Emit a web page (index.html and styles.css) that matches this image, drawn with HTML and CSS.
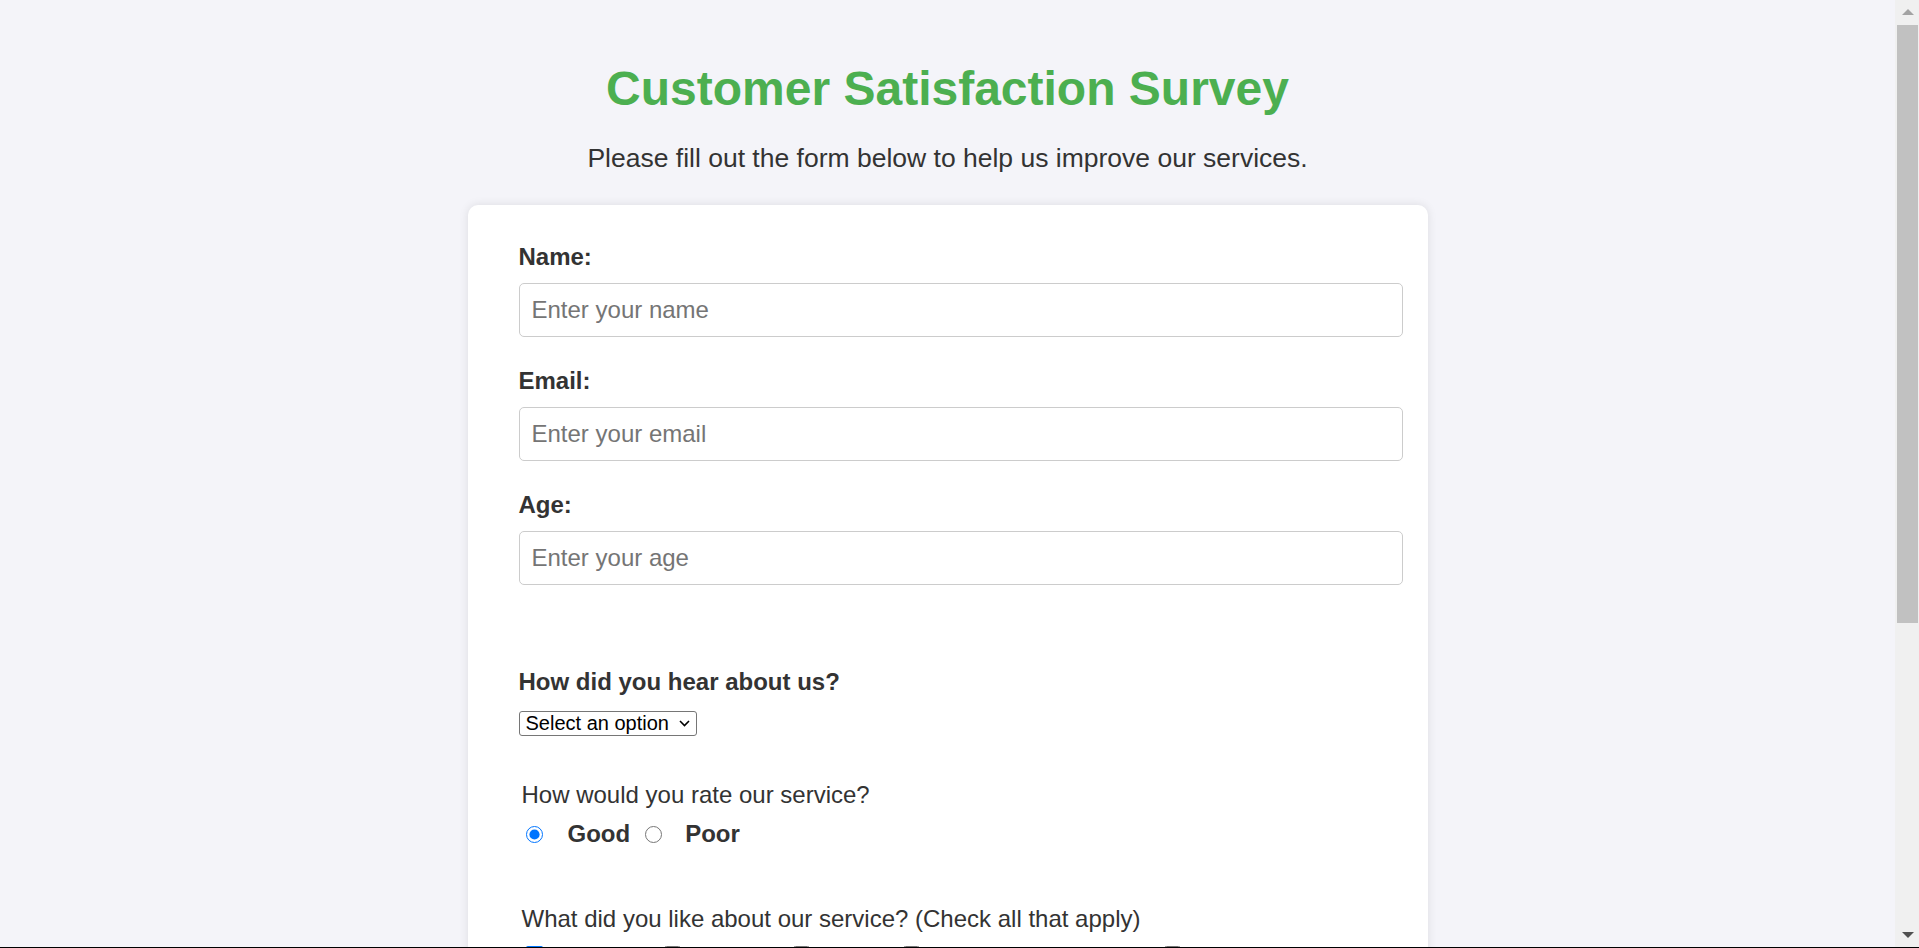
FILE: index.html
```html
<!DOCTYPE html>
<html lang="en">
<head>
<meta charset="utf-8">
<title>Customer Satisfaction Survey</title>
<link rel="stylesheet" href="styles.css">
</head>
<body>
<div class="window">
  <div class="viewport">
    <div class="page">
      <h1 class="title">Customer Satisfaction Survey</h1>
      <p class="intro">Please fill out the form below to help us improve our services.</p>
      <form class="card">
        <div class="field">
          <label class="label" for="name">Name:</label>
          <input class="text-input" type="text" id="name" placeholder="Enter your name">
        </div>
        <div class="field">
          <label class="label" for="email">Email:</label>
          <input class="text-input" type="email" id="email" placeholder="Enter your email">
        </div>
        <div class="field">
          <label class="label" for="age">Age:</label>
          <input class="text-input" type="number" id="age" placeholder="Enter your age">
        </div>
        <div class="field field-spaced">
          <label class="label label-select" for="source">How did you hear about us?</label>
          <span class="select-wrap">
            <select class="select" id="source">
              <option>Select an option</option>
              <option>Friend</option>
              <option>Social Media</option>
              <option>Search</option>
              <option>Other</option>
            </select>
            <svg class="select-chevron" width="11" height="7" viewBox="0 0 11 7"><polyline points="1,1 5.5,5.5 10,1" fill="none" stroke="#000000" stroke-width="1.6"/></svg>
          </span>
        </div>
        <div class="group group-rating">
          <p class="question">How would you rate our service?</p>
          <div class="choices">
            <input class="choice-input" type="radio" name="rating" id="good" checked>
            <label class="choice-label" for="good">Good</label>
            <input class="choice-input" type="radio" name="rating" id="poor">
            <label class="choice-label choice-label-tight" for="poor">Poor</label>
          </div>
        </div>
        <div class="group group-likes">
          <p class="question">What did you like about our service? (Check all that apply)</p>
          <div class="choices choices-check">
            <input class="choice-input" type="checkbox" id="quality" checked>
            <label class="choice-label" for="quality">Quality</label>
            <input class="choice-input" type="checkbox" id="speed">
            <label class="choice-label" for="speed">Speed</label>
            <input class="choice-input" type="checkbox" id="staff">
            <label class="choice-label" for="staff">Staff</label>
            <input class="choice-input" type="checkbox" id="service">
            <label class="choice-label" for="service">Customer Service</label>
            <input class="choice-input" type="checkbox" id="price">
            <label class="choice-label" for="price">Price</label>
          </div>
        </div>
      </form>
    </div>
  </div>
  <div class="scrollbar" aria-hidden="true">
    <div class="sb-button">
      <svg width="12" height="6" viewBox="0 0 12 6"><polygon points="0,6 6,0 12,6" fill="#a3a3a3"/></svg>
    </div>
    <div class="sb-track">
      <div class="sb-thumb"></div>
    </div>
    <div class="sb-button">
      <svg width="12" height="6" viewBox="0 0 12 6"><polygon points="0,0 12,0 6,6" fill="#505050"/></svg>
    </div>
  </div>
</div>
<div class="edge"></div>
</body>
</html>
```
FILE: styles.css
```css
html, body {
  margin: 0;
  padding: 0;
}

body {
  height: 948px;
  overflow: hidden;
  display: flex;
  flex-direction: column;
  font-family: "Liberation Sans", Arial, sans-serif;
  color: #333333;
  background: #f4f4f9;
}

.window {
  height: 947px;
  display: flex;
  flex-direction: row;
}

.viewport {
  flex: 1;
  overflow: hidden;
  background: #f4f4f9;
}

.page {
  padding-top: 61px;
}

.title {
  margin: 0;
  text-align: center;
  font-size: 48px;
  line-height: 56px;
  font-weight: bold;
  color: #4caf50;
}

.intro {
  margin: 27px 0 33px;
  text-align: center;
  font-size: 26.5px;
  line-height: 28px;
  color: #333333;
}

.card {
  width: 960px;
  box-sizing: border-box;
  margin: 0 auto;
  padding: 38px 51px 40px 51px;
  background: #ffffff;
  border-radius: 10px;
  box-shadow: 0 0 10px rgba(0, 0, 0, 0.1);
}

.field {
  margin-bottom: 30px;
}

.field-spaced {
  margin-top: 83px;
  margin-bottom: 0;
}

.label {
  display: block;
  font-size: 24px;
  line-height: 28px;
  font-weight: bold;
  color: #333333;
  margin-bottom: 12px;
}

.label-select {
  margin-bottom: 15px;
}

.text-input {
  display: block;
  width: 100%;
  box-sizing: content-box;
  height: 52px;
  padding: 0 12px;
  border: 1px solid #cccccc;
  border-radius: 5px;
  font-family: "Liberation Sans", Arial, sans-serif;
  font-size: 24px;
  color: #333333;
  background: #ffffff;
}

.text-input::placeholder {
  color: #757575;
}

.select-wrap {
  position: relative;
  display: inline-block;
  vertical-align: top;
}

.select {
  display: block;
  width: 178px;
  height: 25px;
  box-sizing: border-box;
  margin: 0;
  padding: 0 0 0 6px;
  -webkit-appearance: none;
  appearance: none;
  border: 1px solid #767676;
  border-radius: 3px;
  background: #ffffff;
  font-family: "Liberation Sans", Arial, sans-serif;
  font-size: 20px;
  line-height: 23px;
  color: #000000;
}

.select-chevron {
  position: absolute;
  right: 7px;
  top: 9px;
  pointer-events: none;
}

.group {
  padding-left: 3px;
}

.group-rating {
  margin-top: 45px;
}

.group-likes {
  margin-top: 57px;
}

.question {
  margin: 0;
  font-size: 24px;
  line-height: 28px;
  color: #333333;
}

.choices {
  display: flex;
  align-items: center;
  height: 28px;
  margin-top: 11px;
}

.choices-check {
  margin-top: 13px;
}

.choice-input {
  width: 17px;
  height: 17px;
  margin: 0 0 0 4px;
  flex: none;
}

.choices-check .choice-input {
  margin-bottom: 11px;
}

.choice-label {
  margin-left: 25px;
  margin-right: 11px;
  font-size: 24px;
  line-height: 28px;
  font-weight: bold;
  color: #333333;
}

.choice-label-tight {
  margin-left: 23px;
}

.choice-label:last-child {
  margin-right: 0;
}

.scrollbar {
  width: 24px;
  flex: none;
  display: flex;
  flex-direction: column;
  background: #f0f0f0;
}

.sb-button {
  height: 24px;
  flex: none;
  display: flex;
  align-items: center;
  justify-content: center;
  padding-left: 1px;
}

.sb-track {
  flex: 1;
  padding-top: 1px;
}

.sb-thumb {
  height: 598px;
  margin: 0 1px 0 2px;
  background: #c1c1c1;
}

.edge {
  height: 1px;
  background: #000000;
}
```
